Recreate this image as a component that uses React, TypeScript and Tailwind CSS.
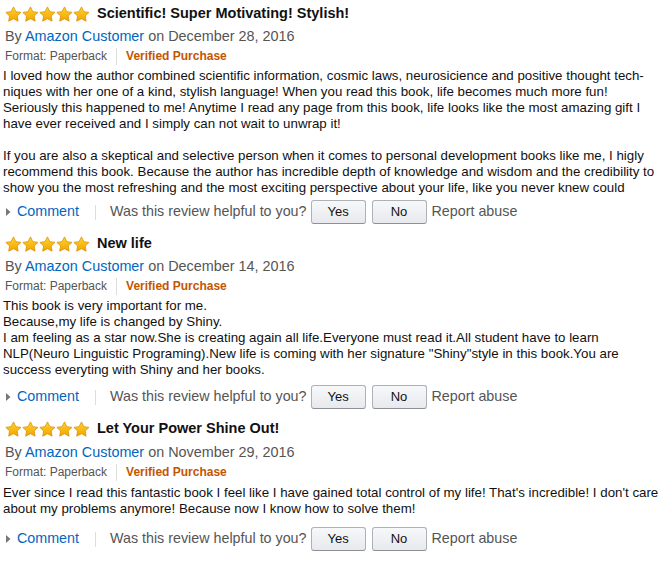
import React from 'react';

type Review = {
  title: string;
  date: string;
  lines: string[];
  gap: string;
  byGap: string;
  bodyGap: string;
};

const reviews: Review[] = [
  {
    title: 'Scientific! Super Motivating! Stylish!',
    date: 'December 28, 2016',
    gap: 'mt-[4px]',
    byGap: 'mt-[1px]',
    bodyGap: 'mt-[2px]',
    lines: [
      'I loved how the author combined scientific information, cosmic laws, neurosicience and positive thought tech-',
      'niques with her one of a kind, stylish language! When you read this book, life becomes much more fun!',
      'Seriously this happened to me! Anytime I read any page from this book, life looks like the most amazing gift I',
      'have ever received and I simply can not wait to unwrap it!',
      '',
      'If you are also a skeptical and selective person when it comes to personal development books like me, I higly',
      'recommend this book. Because the author has incredible depth of knowledge and wisdom and the credibility to',
      'show you the most refreshing and the most exciting perspective about your life, like you never knew could',
    ],
  },
  {
    title: 'New life',
    date: 'December 14, 2016',
    gap: 'mt-[7px]',
    byGap: 'mt-[1px]',
    bodyGap: 'mt-[2px]',
    lines: [
      'This book is very important for me.',
      'Because,my life is changed by Shiny.',
      'I am feeling as a star now.She is creating again all life.Everyone must read it.All student have to learn',
      'NLP(Neuro Linguistic Programing).New life is coming with her signature "Shiny"style in this book.You are',
      'success everyting with Shiny and her books.',
    ],
  },
  {
    title: 'Let Your Power Shine Out!',
    date: 'November 29, 2016',
    gap: 'mt-[10px]',
    byGap: 'mt-[2px]',
    bodyGap: 'mt-[3px]',
    lines: [
      "Ever since I read this fantastic book I feel like I have gained total control of my life! That's incredible! I don't care",
      'about my problems anymore! Because now I know how to solve them!',
    ],
  },
];

function Star({ id }: { id: string }) {
  return (
    <svg width="17" height="17" viewBox="0 0 24 24">
      <defs>
        <linearGradient id={id} x1="0" y1="0" x2="0" y2="1">
          <stop offset="0" stopColor="#ffd52e" />
          <stop offset="1" stopColor="#f3a200" />
        </linearGradient>
      </defs>
      <path
        d="M12 1.3l3.2 6.7 7.3 1-5.3 5.1 1.3 7.3L12 17.9l-6.8 3.5 1.3-7.3-5.3-5.1 7.3-1z"
        fill={`url(#${id})`}
        stroke="#d98f00"
        strokeWidth="1.1"
        strokeLinejoin="round"
      />
    </svg>
  );
}

function Stars({ n }: { n: number }) {
  return (
    <div className="flex">
      {[0, 1, 2, 3, 4].map((i) => (
        <Star key={i} id={`sg-${n}-${i}`} />
      ))}
    </div>
  );
}

function ReviewBlock({ r, n }: { r: Review; n: number }) {
  return (
    <div className="mb-[9px]">
      {/* title */}
      <div className="flex items-center h-[22px] pl-[5px]">
        <Stars n={n} />
        <span className="ml-[7px] text-[14.5px] font-bold text-[#111]">{r.title}</span>
      </div>

      {/* byline */}
      <div className={`h-[20px] leading-[20px] pl-[5px] text-[14.4px] text-[#555] ${r.byGap}`}>
        By <span className="text-[#0066c0]">Amazon Customer</span> on {r.date}
      </div>

      {/* format */}
      <div className="flex items-center h-[20px] pl-[5px] text-[12px]">
        <span className="text-[#555]">Format: Paperback</span>
        <span className="mx-[9px] w-px h-[17px] bg-[#ddd]" />
        <span className="font-bold text-[#c45500]">Verified Purchase</span>
      </div>

      {/* body */}
      <div className={`pl-[3px] text-[13.3px] leading-[16px] text-[#111] whitespace-nowrap ${r.bodyGap}`}>
        {r.lines.map((l, i) => (
          <div key={i} className="h-[16px]">
            {l}
          </div>
        ))}
      </div>

      {/* actions */}
      <div className={`flex items-center h-[24px] pl-[5px] text-[14.3px] ${r.gap}`}>
        <svg width="5" height="8" viewBox="0 0 5 8" className="ml-[1px]">
          <path d="M0 0l4.5 4L0 8z" fill="#777" />
        </svg>
        <span className="ml-[6px] text-[#0066c0]">Comment</span>
        <span className="ml-[16px] w-px h-[15px] bg-[#ddd]" />
        <span className="ml-[14px] text-[#555]">Was this review helpful to you?</span>
        <button className="ml-[4px] w-[55px] h-[24px] rounded-[3px] border border-[#adb1b8] border-b-[#8d9096] bg-gradient-to-b from-[#f7f8fa] to-[#e7e9ec] text-[13px] text-[#111]">
          Yes
        </button>
        <button className="ml-[6px] w-[55px] h-[24px] rounded-[3px] border border-[#adb1b8] border-b-[#8d9096] bg-gradient-to-b from-[#f7f8fa] to-[#e7e9ec] text-[13px] text-[#111]">
          No
        </button>
        <span className="ml-[5px] text-[#555]">Report abuse</span>
      </div>
    </div>
  );
}

export default function App() {
  return (
    <div className="w-[666px] h-[563px] overflow-hidden bg-white pt-[3px]" style={{ fontFamily: '"Liberation Sans", Arial, sans-serif' }}>
      {reviews.map((r, i) => (
        <ReviewBlock key={r.title} r={r} n={i} />
      ))}
    </div>
  );
}
